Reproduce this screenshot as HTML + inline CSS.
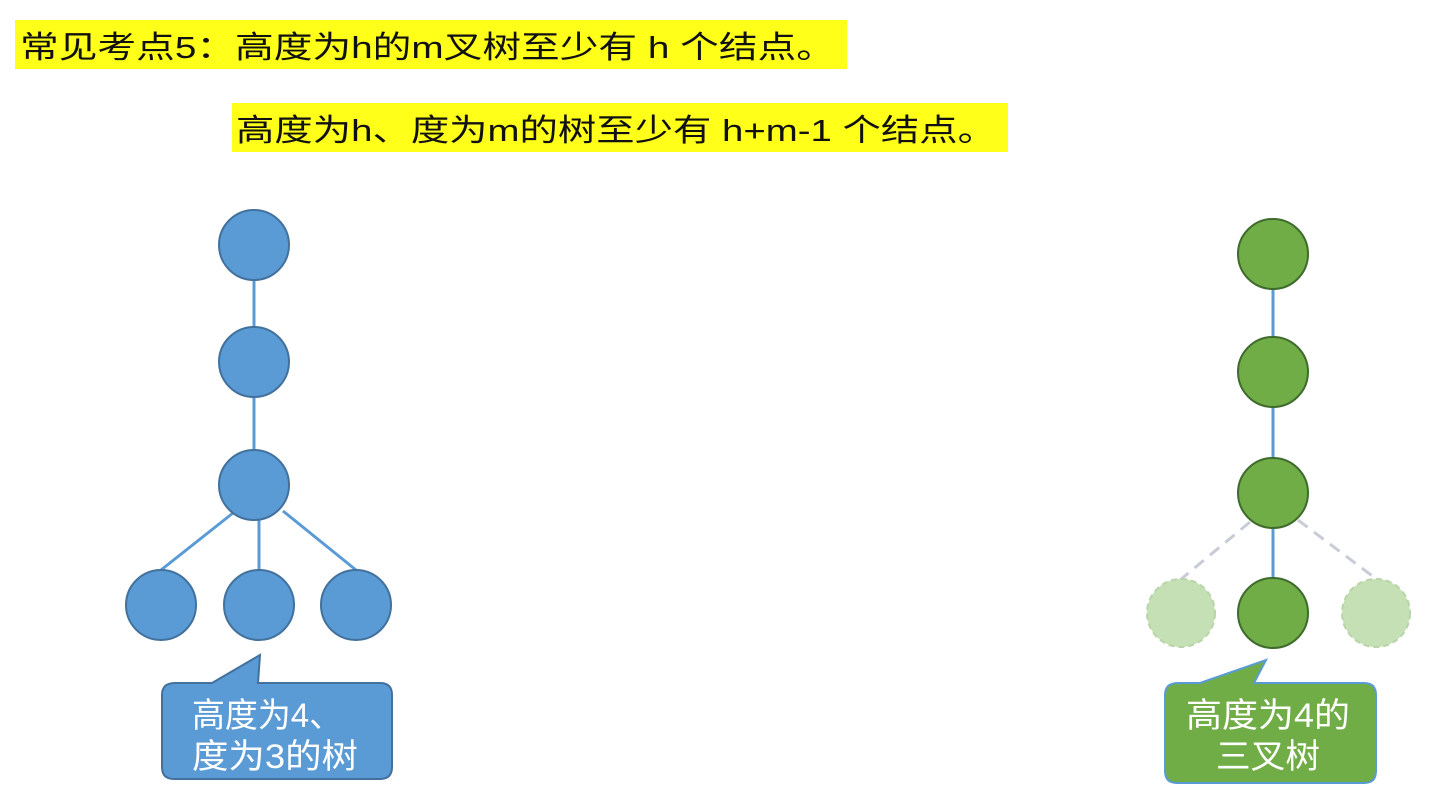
<!DOCTYPE html>
<html><head><meta charset="utf-8"><style>
html,body{margin:0;padding:0;background:#fff;width:1435px;height:811px;overflow:hidden}
svg{display:block}
text{font-family:"Liberation Sans","Noto Sans CJK SC",sans-serif}
</style></head><body>
<svg width="1435" height="811" viewBox="0 0 1435 811" xmlns="http://www.w3.org/2000/svg">
<rect x="15" y="20" width="832" height="49" fill="#ffff1a"/>
<text x="20" y="58" font-size="31" fill="#111" textLength="815" lengthAdjust="spacingAndGlyphs">常见考点5：高度为h的m叉树至少有 h 个结点。</text>
<rect x="232" y="103" width="776" height="49" fill="#ffff1a"/>
<text x="236" y="141" font-size="31" fill="#111" textLength="760" lengthAdjust="spacingAndGlyphs">高度为h、度为m的树至少有 h+m-1 个结点。</text>

<g stroke="#5b9bd5" stroke-width="3">
<line x1="254" y1="280" x2="254" y2="327"/>
<line x1="254" y1="397" x2="254" y2="450"/>
<line x1="233" y1="513" x2="161" y2="570"/>
<line x1="259" y1="520" x2="259" y2="570"/>
<line x1="283" y1="511" x2="356" y2="570"/>
</g>
<g fill="#5b9bd5" stroke="#41719c" stroke-width="2">
<circle cx="254" cy="245" r="35"/>
<circle cx="254" cy="362" r="35"/>
<circle cx="254" cy="485" r="35"/>
<circle cx="161" cy="605" r="35"/>
<circle cx="259" cy="605" r="35"/>
<circle cx="356" cy="605" r="35"/>
</g>
<path d="M175 683 L212 683 L260 655 L258 683 L380 683 Q392 683 392 695 L392 767 Q392 779 380 779 L174 779 Q162 779 162 767 L162 695 Q162 683 175 683 Z" fill="#5b9bd5" stroke="#41719c" stroke-width="2"/>
<text x="192" y="727" font-size="34" fill="#fff" textLength="150" lengthAdjust="spacingAndGlyphs">高度为4、</text>
<text x="192" y="768" font-size="34" fill="#fff" textLength="166" lengthAdjust="spacingAndGlyphs">度为3的树</text>

<g stroke="#c8ccd6" stroke-width="3" stroke-dasharray="12 8">
<line x1="1250" y1="522" x2="1180" y2="580"/>
<line x1="1298" y1="520" x2="1375" y2="578"/>
</g>
<g stroke="#5b9bd5" stroke-width="3">
<line x1="1273" y1="289" x2="1273" y2="337"/>
<line x1="1273" y1="407" x2="1273" y2="458"/>
<line x1="1273" y1="528" x2="1273" y2="578"/>
</g>
<circle cx="1181" cy="613" r="34" fill="#c5e0b4" stroke="#b8d4a8" stroke-width="2" stroke-dasharray="6 4"/>
<circle cx="1376" cy="613" r="34" fill="#c5e0b4" stroke="#b8d4a8" stroke-width="2" stroke-dasharray="6 4"/>
<g fill="#70ad47" stroke="#3f6b2c" stroke-width="2">
<circle cx="1273" cy="254" r="35"/>
<circle cx="1273" cy="372" r="35"/>
<circle cx="1273" cy="493" r="35"/>
<circle cx="1273" cy="613" r="35"/>
</g>
<path d="M1178 683 L1200 683 L1266 660 L1254 683 L1364 683 Q1376 683 1376 695 L1376 771 Q1376 783 1364 783 L1177 783 Q1165 783 1165 771 L1165 695 Q1165 683 1178 683 Z" fill="#70ad47" stroke="#5b9bd5" stroke-width="2"/>
<text x="1268" y="727" font-size="34" fill="#fff" text-anchor="middle" textLength="164" lengthAdjust="spacingAndGlyphs">高度为4的</text>
<text x="1268" y="768" font-size="34" fill="#fff" text-anchor="middle" textLength="104" lengthAdjust="spacingAndGlyphs">三叉树</text>
</svg>
</body></html>
